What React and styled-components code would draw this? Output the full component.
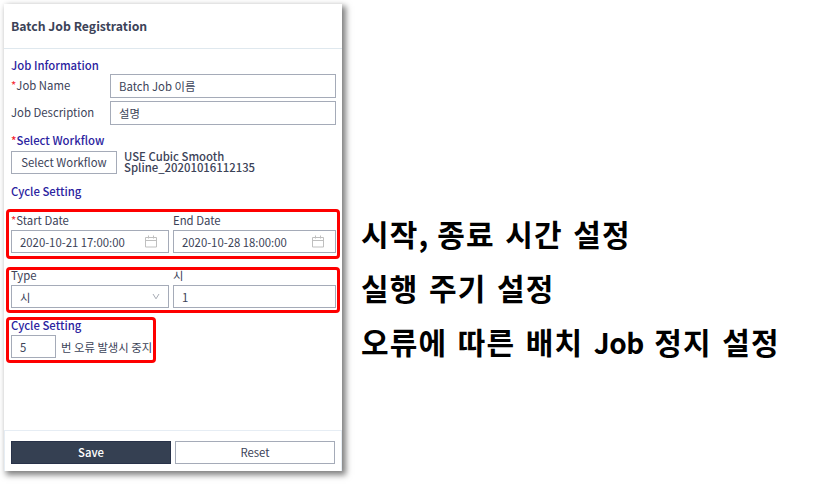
import React from "react";
import styled, { createGlobalStyle } from "styled-components";

const GlobalStyle = createGlobalStyle`
  * { box-sizing: border-box; }
  body {
    margin: 0;
    background: #fff;
    overflow: hidden;
    font-family: "Noto Sans CJK KR", "Noto Sans", sans-serif;
    font-size: 11.35px;
    color: #3c4358;
  }
`;

const Page = styled.main`
  display: flex;
  align-items: flex-start;
  width: 832px;
  height: 484px;
  padding: 4px 0 0 4px;
`;

const Panel = styled.section`
  display: flex;
  flex-direction: column;
  flex: none;
  width: 338px;
  height: 467px;
  background: #fff;
  box-shadow: 3px 3px 6px 1px rgba(0, 0, 0, 0.5);
`;

const Header = styled.header`
  display: flex;
  align-items: center;
  height: 45px;
  padding: 0 7px;
  border-bottom: 1px solid #dfe8ee;
`;

const Text = styled.span`
  display: block;
  white-space: nowrap;
`;

const Title = styled(Text)`
  font-size: 12.25px;
  font-weight: 700;
`;

const Body = styled.div`
  display: flex;
  flex-direction: column;
  flex: 1;
  padding: 7px 2px 0;
`;

const Block = styled.div`
  padding: 0 5px;
  margin-top: ${(p) => p.$top || 0}px;
`;

const SectionTitle = styled.h2`
  margin: 0;
  height: ${(p) => p.$height || 18}px;
  line-height: ${(p) => p.$line || p.$height || 18}px;
  font-size: inherit;
  font-weight: 500;
  color: #2b23a0;
  white-space: nowrap;
`;

const Star = styled.span`
  color: #f5222d;
`;

const FieldRow = styled.div`
  display: grid;
  grid-template-columns: 99px 226px;
  align-items: center;
  height: 24px;
  margin-bottom: 3px;
  line-height: 16px;

  > span {
    padding-bottom: 2px;
  }
`;

const Box = styled.div`
  display: flex;
  align-items: center;
  justify-content: space-between;
  flex: none;
  width: ${(p) => p.$width}px;
  height: ${(p) => p.$height || 24}px;
  padding: 0 11px 0 8px;
  border: 1px solid #a5abb8;
  background: #fff;
`;

const Button = styled.button`
  display: flex;
  align-items: center;
  justify-content: center;
  width: ${(p) => p.$width}px;
  height: 23px;
  padding: 0 0 1px;
  border: 1px solid ${(p) => (p.$primary ? "#283249" : "#a5abb8")};
  background: ${(p) => (p.$primary ? "#354052" : "#fff")};
  color: ${(p) => (p.$primary ? "#fff" : "#3c4358")};
  font: inherit;
  font-weight: ${(p) => (p.$primary ? 500 : 400)};
`;

const WorkflowRow = styled.div`
  display: flex;
  align-items: center;
  gap: 7px;
  height: 23px;
`;

const WorkflowName = styled.p`
  width: 140px;
  margin: 0;
  padding-bottom: 2px;
  font-weight: 500;
  line-height: 11px;
`;

const Highlight = styled.div`
  width: ${(p) => p.$width}px;
  height: ${(p) => p.$height}px;
  margin-top: ${(p) => p.$top}px;
  padding: 0 2px;
  border: 3px solid #fe0000;
  border-radius: 4px;
`;

const Columns = styled.div`
  display: grid;
  grid-template-columns: 158px 163px;
  column-gap: 4px;
`;

const Label = styled.div`
  height: ${(p) => p.$height}px;
  line-height: ${(p) => p.$line}px;
  white-space: nowrap;
`;

const StopRow = styled.div`
  display: flex;
  align-items: center;
  gap: 5px;
`;

const Footer = styled.footer`
  display: flex;
  gap: 4px;
  height: 41px;
  padding: 10px 6px;
  border: 1px solid #e6edf4;
  border-bottom: 0;
`;

const Notes = styled.aside`
  display: flex;
  flex-direction: column;
  padding: 202px 0 0 19px;
`;

const Note = styled.p`
  margin: 0;
  height: 54px;
  line-height: 54px;
  font-size: 30px;
  font-weight: 700;
  color: #000;
  white-space: nowrap;
  letter-spacing: 1.2px;
  word-spacing: 2.4px;
`;

const Tight = styled.span`
  letter-spacing: ${(p) => p.$spacing}px;
  font-size: ${(p) => p.$size || 30}px;
`;

const CalendarIcon = () => (
  <svg width="12" height="13" viewBox="0 0 12 13" fill="none" stroke="#bfbfbf">
    <path d="M.5 2.5h11v9.5H.5zM.5 5.5h11M3.5.5v3M8.5.5v3" />
  </svg>
);

const ChevronIcon = () => (
  <svg width="8" height="7" viewBox="0 0 8 7" fill="none" stroke="#a8acb5">
    <path d="M1 1 4 5.8 7 1" />
  </svg>
);

const IconSlot = styled.span`
  display: flex;
  margin-right: ${(p) => p.$right || 0}px;
`;

export default function App() {
  return (
    <>
      <GlobalStyle />
      <Page>
        <Panel>
          <Header>
            <Title>Batch Job Registration</Title>
          </Header>
          <Body>
            <Block>
              <SectionTitle>Job Information</SectionTitle>
              <FieldRow>
                <Text><Star>*</Star>Job Name</Text>
                <Box $width={226}><Text>Batch Job 이름</Text></Box>
              </FieldRow>
              <FieldRow>
                <Text>Job Description</Text>
                <Box $width={226}><Text>설명</Text></Box>
              </FieldRow>
            </Block>
            <Block $top={4}>
              <SectionTitle $height={19} $line={17}><Star>*</Star>Select Workflow</SectionTitle>
              <WorkflowRow>
                <Button $width={106}><Text>Select Workflow</Text></Button>
                <WorkflowName>USE Cubic Smooth Spline_20201016112135</WorkflowName>
              </WorkflowRow>
            </Block>
            <Block $top={8}>
              <SectionTitle>Cycle Setting</SectionTitle>
            </Block>
            <Highlight $width={334} $height={50} $top={9}>
              <Columns>
                <Label $height={18} $line={16}><Star>*</Star>Start Date</Label>
                <Label $height={18} $line={16}>End Date</Label>
                <Box $width={158} $height={23}>
                  <Text>2020-10-21 17:00:00</Text>
                  <IconSlot><CalendarIcon /></IconSlot>
                </Box>
                <Box $width={163} $height={23}>
                  <Text>2020-10-28 18:00:00</Text>
                  <IconSlot><CalendarIcon /></IconSlot>
                </Box>
              </Columns>
            </Highlight>
            <Highlight $width={334} $height={46} $top={8}>
              <Columns>
                <Label $height={15} $line={10}>Type</Label>
                <Label $height={15} $line={10}>시</Label>
                <Box $width={158} $height={23}>
                  <Text>시</Text>
                  <IconSlot $right={-3}><ChevronIcon /></IconSlot>
                </Box>
                <Box $width={163} $height={23}><Text>1</Text></Box>
              </Columns>
            </Highlight>
            <Highlight $width={150} $height={46} $top={4}>
              <SectionTitle $height={15} $line={10}>Cycle Setting</SectionTitle>
              <StopRow>
                <Box $width={45} $height={23}><Text>5</Text></Box>
                <Text>번 오류 발생시 중지</Text>
              </StopRow>
            </Highlight>
          </Body>
          <Footer>
            <Button $width={160} $primary>Save</Button>
            <Button $width={160}>Reset</Button>
          </Footer>
        </Panel>
        <Notes>
          <Note>시작<Tight $spacing={-1.5}>,</Tight> 종료 시간 설정</Note>
          <Note>실행 주기 설정</Note>
          <Note>오류에 따른 배치 <Tight $spacing={-0.5} $size={28}>Job</Tight> 정지 설정</Note>
        </Notes>
      </Page>
    </>
  );
}
